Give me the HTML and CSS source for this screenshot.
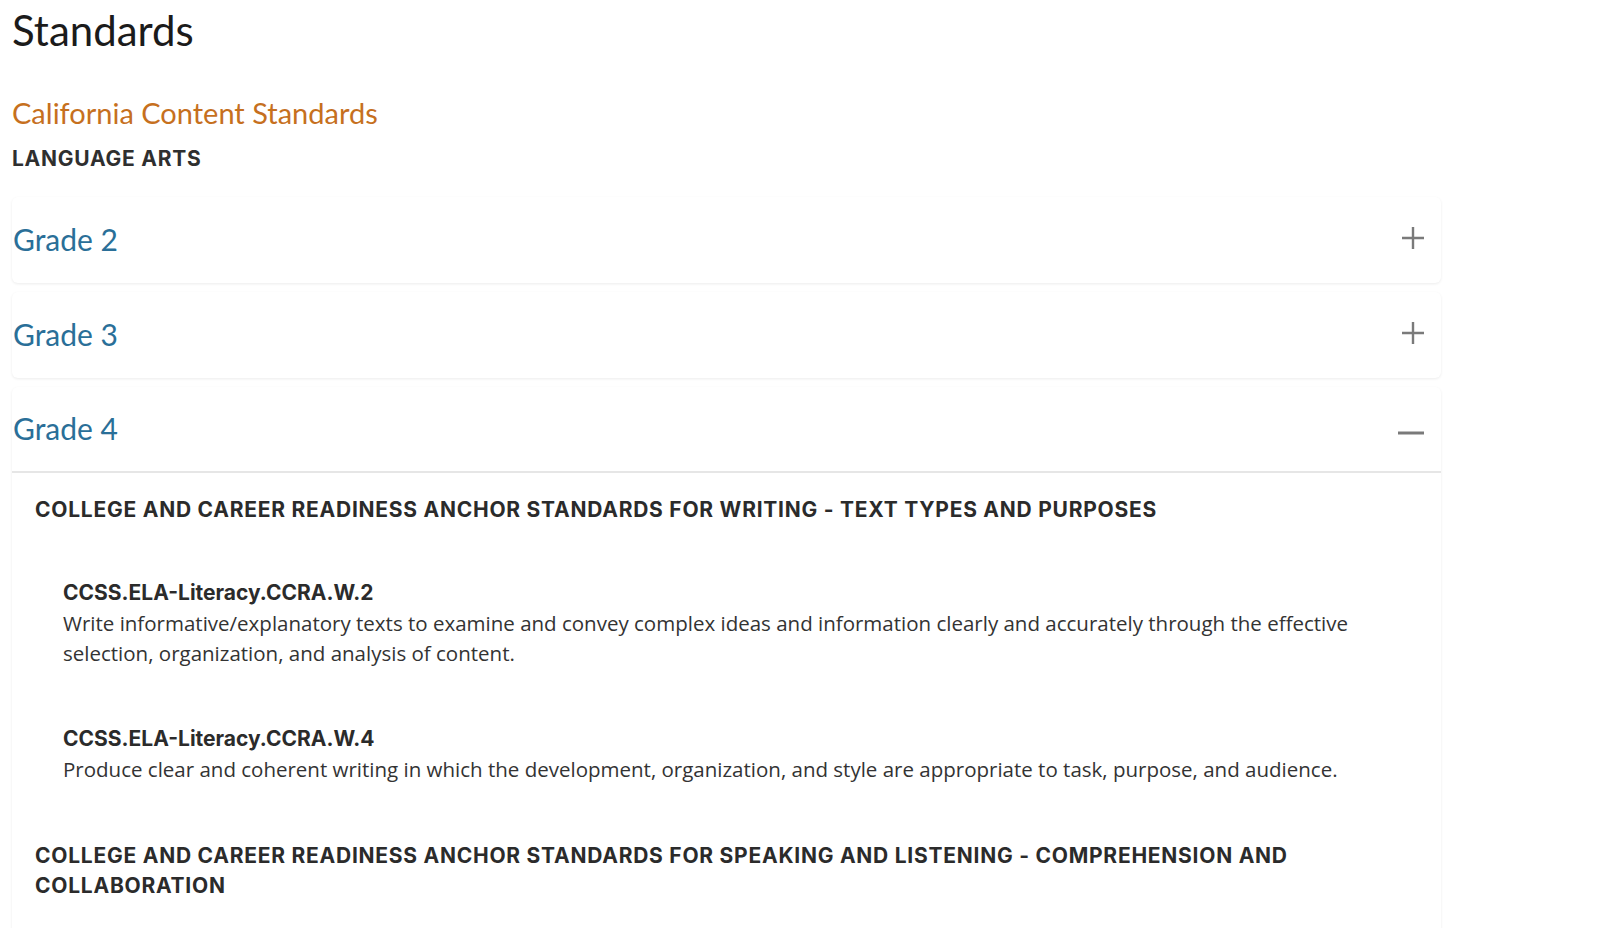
FILE: index.html
```html
<!DOCTYPE html>
<html lang="en">
<head>
<meta charset="utf-8">
<title>Standards</title>
<link rel="stylesheet" href="styles.css">
</head>
<body>
<main class="page">
  <h1 class="title">Standards</h1>
  <h2 class="framework">California Content Standards</h2>
  <h3 class="subject">LANGUAGE ARTS</h3>
  <div class="accordion">
    <section class="card">
      <div class="card-head">
        <span class="grade">Grade 2</span>
        <svg class="toggle" width="24" height="24" viewBox="0 0 24 24"><path d="M12 1v22M1 12h22" stroke="#7a7a7a" stroke-width="2.4" fill="none"/></svg>
      </div>
    </section>
    <section class="card">
      <div class="card-head">
        <span class="grade">Grade 3</span>
        <svg class="toggle" width="24" height="24" viewBox="0 0 24 24"><path d="M12 1v22M1 12h22" stroke="#7a7a7a" stroke-width="2.4" fill="none"/></svg>
      </div>
    </section>
    <section class="card open">
      <div class="card-head">
        <span class="grade">Grade 4</span>
        <svg class="toggle minus" width="28" height="24" viewBox="0 0 28 24"><path d="M1 12h26" stroke="#7a7a7a" stroke-width="3" fill="none"/></svg>
      </div>
      <div class="card-body">
        <h4 class="group">COLLEGE AND CAREER READINESS ANCHOR STANDARDS FOR WRITING - TEXT TYPES AND PURPOSES</h4>
        <div class="item">
          <div class="code">CCSS.ELA-Literacy.CCRA.W.2</div>
          <p class="desc">Write informative/explanatory texts to examine and convey complex ideas and information clearly and accurately through the effective selection, organization, and analysis of content.</p>
        </div>
        <div class="item">
          <div class="code">CCSS.ELA-Literacy.CCRA.W.4</div>
          <p class="desc">Produce clear and coherent writing in which the development, organization, and style are appropriate to task, purpose, and audience.</p>
        </div>
        <h4 class="group second">COLLEGE AND CAREER READINESS ANCHOR STANDARDS FOR SPEAKING AND LISTENING - COMPREHENSION AND COLLABORATION</h4>
      </div>
    </section>
  </div>
</main>
</body>
</html>
```

FILE: styles.css
```css
html, body {
  margin: 0;
  padding: 0;
  background: #ffffff;
}

.page {
  padding: 0 159px 0 12px;
  font-family: "Lato", "Noto Sans", sans-serif;
}

.title {
  margin: 0;
  padding-top: 7px;
  font-size: 42px;
  line-height: 46px;
  font-weight: 400;
  color: #1b1b1b;
}

.framework {
  margin: 0;
  padding-top: 43px;
  font-size: 29px;
  line-height: 34px;
  font-weight: 400;
  color: #c6701e;
}

.subject {
  margin: 0;
  padding-top: 17px;
  font-family: "Inter", "Noto Sans", sans-serif;
  font-size: 21px;
  line-height: 24px;
  letter-spacing: 0.75px;
  font-weight: 700;
  color: #2f2f2f;
}

.accordion {
  margin-top: 26px;
  display: flex;
  flex-direction: column;
  gap: 9px;
}

.card {
  background: #ffffff;
  border-radius: 6px;
  box-shadow: 0 1px 3px rgba(0, 0, 0, 0.08);
}

.card-head {
  height: 86px;
  display: flex;
  align-items: center;
  justify-content: space-between;
  padding: 0 16px 0 1px;
  box-sizing: border-box;
}

.open .card-head {
  border-bottom: 2px solid #e6e6e6;
}

.grade {
  font-size: 30px;
  color: #2a6f98;
  font-weight: 400;
  position: relative;
  top: -1px;
}

.toggle {
  display: block;
  margin-right: 0;
  margin-top: -4px;
}

.toggle.minus {
  margin-right: 0;
  margin-top: 8px;
}

.card-body {
  padding: 22px 23px 60px 23px;
}

.group {
  margin: 0;
  font-family: "Inter", "Noto Sans", sans-serif;
  font-size: 21px;
  line-height: 30px;
  letter-spacing: 0.75px;
  font-weight: 700;
  color: #2b2b2b;
  max-width: 1330px;
}

.group.second {
  margin-top: 57px;
}

.item {
  margin-top: 53px;
  padding-left: 28px;
}

.item + .item {
  margin-top: 56px;
}

.code {
  font-family: "Inter", "Noto Sans", sans-serif;
  font-size: 21px;
  line-height: 30px;
  font-weight: 700;
  color: #2b2b2b;
}

.desc {
  margin: 0;
  font-family: "Open Sans", "Noto Sans", sans-serif;
  font-size: 20.5px;
  line-height: 30px;
  color: #333333;
  max-width: 1350px;
}
```
